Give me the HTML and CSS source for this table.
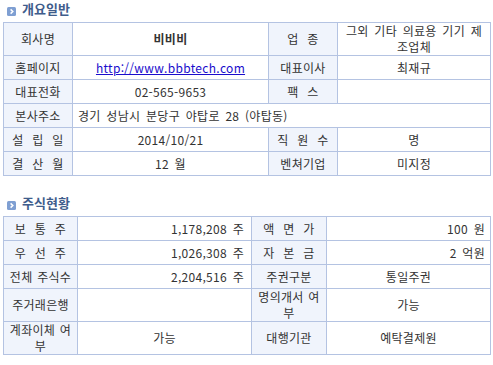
FILE: index.html
```html
<!DOCTYPE html>
<html lang="ko">
<head>
<meta charset="utf-8">
<link rel="stylesheet" href="styles.css">
</head>
<body>
<div class="page">
  <section class="sec">
    <h2 class="sec-title"><svg class="ico" width="9" height="9" viewBox="0 0 9 9"><rect width="9" height="9" rx="1.5" fill="#7f9fd2"/><path d="M3.6 2.4 L5.8 4.5 L3.6 6.6" fill="none" stroke="#fff" stroke-width="1.5"/></svg>개요일반</h2>
    <table class="grid">
      <colgroup><col style="width:69px"><col style="width:196px"><col style="width:69px"><col style="width:153px"></colgroup>
      <tr><th class="sp">회사명</th><td class="c b">비비비</td><th class="sp">업 종</th><td class="c wrap">그외 기타 의료용 기기 제조업체</td></tr>
      <tr><th>홈페이지</th><td class="c"><a href="#">http://www.bbbtech.com</a></td><th>대표이사</th><td class="c">최재규</td></tr>
      <tr><th>대표전화</th><td class="c">02-565-9653</td><th class="sp">팩 스</th><td class="c"></td></tr>
      <tr><th>본사주소</th><td class="l" colspan="3">경기 성남시 분당구 야탑로 28 (야탑동)</td></tr>
      <tr><th class="sp">설 립 일</th><td class="c">2014/10/21</td><th class="sp">직 원 수</th><td class="c">명</td></tr>
      <tr><th class="sp">결 산 월</th><td class="c">12 월</td><th>벤쳐기업</th><td class="c">미지정</td></tr>
    </table>
  </section>
  <section class="sec sec2">
    <h2 class="sec-title"><svg class="ico" width="9" height="9" viewBox="0 0 9 9"><rect width="9" height="9" rx="1.5" fill="#7f9fd2"/><path d="M3.6 2.4 L5.8 4.5 L3.6 6.6" fill="none" stroke="#fff" stroke-width="1.5"/></svg>주식현황</h2>
    <table class="grid">
      <colgroup><col style="width:74px"><col style="width:174px"><col style="width:75px"><col style="width:164px"></colgroup>
      <tr><th class="sp">보 통 주</th><td class="r r1">1,178,208 주</td><th class="sp">액 면 가</th><td class="r">100 원</td></tr>
      <tr><th class="sp">우 선 주</th><td class="r r1">1,026,308 주</td><th class="sp">자 본 금</th><td class="r">2 억원</td></tr>
      <tr><th>전체 주식수</th><td class="r r1">2,204,516 주</td><th>주권구분</th><td class="c">통일주권</td></tr>
      <tr><th>주거래은행</th><td class="c"></td><th>명의개서 여부</th><td class="c">가능</td></tr>
      <tr><th>계좌이체 여부</th><td class="c">가능</td><th>대행기관</th><td class="c">예탁결제원</td></tr>
    </table>
  </section>
</div>
</body>
</html>
```

FILE: styles.css
```css
html, body {
  margin: 0;
  padding: 0;
  background: #fff;
}
body {
  font-family: "Noto Sans CJK KR", "Noto Sans", sans-serif;
  font-size: 12px;
  color: #333;
}
.page {
  padding: 0 3px;
}
.sec-title {
  margin: 0;
  height: 22px;
  display: flex;
  align-items: flex-start;
  padding: 1px 0 0 4px;
  box-sizing: border-box;
  font-size: 13px;
  font-weight: bold;
  color: #3f5d8c;
  line-height: 16px;
}
.ico {
  margin: 6px 6px 0 0;
  flex: none;
}
.sec2 {
  margin-top: 18px;
}
.grid {
  width: 487px;
  border-collapse: collapse;
  table-layout: fixed;
  border: 1px solid #b4c3e2;
}
.grid th, .grid td {
  border: 1px solid #b4c3e2;
  height: 24px;
  padding: 0 5px;
  line-height: 16px;
  vertical-align: middle;
  box-sizing: border-box;
  letter-spacing: 0.3px;
  word-spacing: 2px;
}
.grid th {
  background: #f0f4fc;
  font-weight: normal;
  text-align: center;
  padding: 0 3px;
  word-spacing: 1px;
}
.grid th.sp {
  word-spacing: 5px;
}
.wrap {
  word-break: break-all;
}
.c { text-align: center; }
.l { text-align: left; }
.r { text-align: right; }
.grid td.r1 { padding-right: 7px; }
.b { font-weight: bold; }
a {
  color: #1a0dcc;
  text-decoration: underline;
}
```
